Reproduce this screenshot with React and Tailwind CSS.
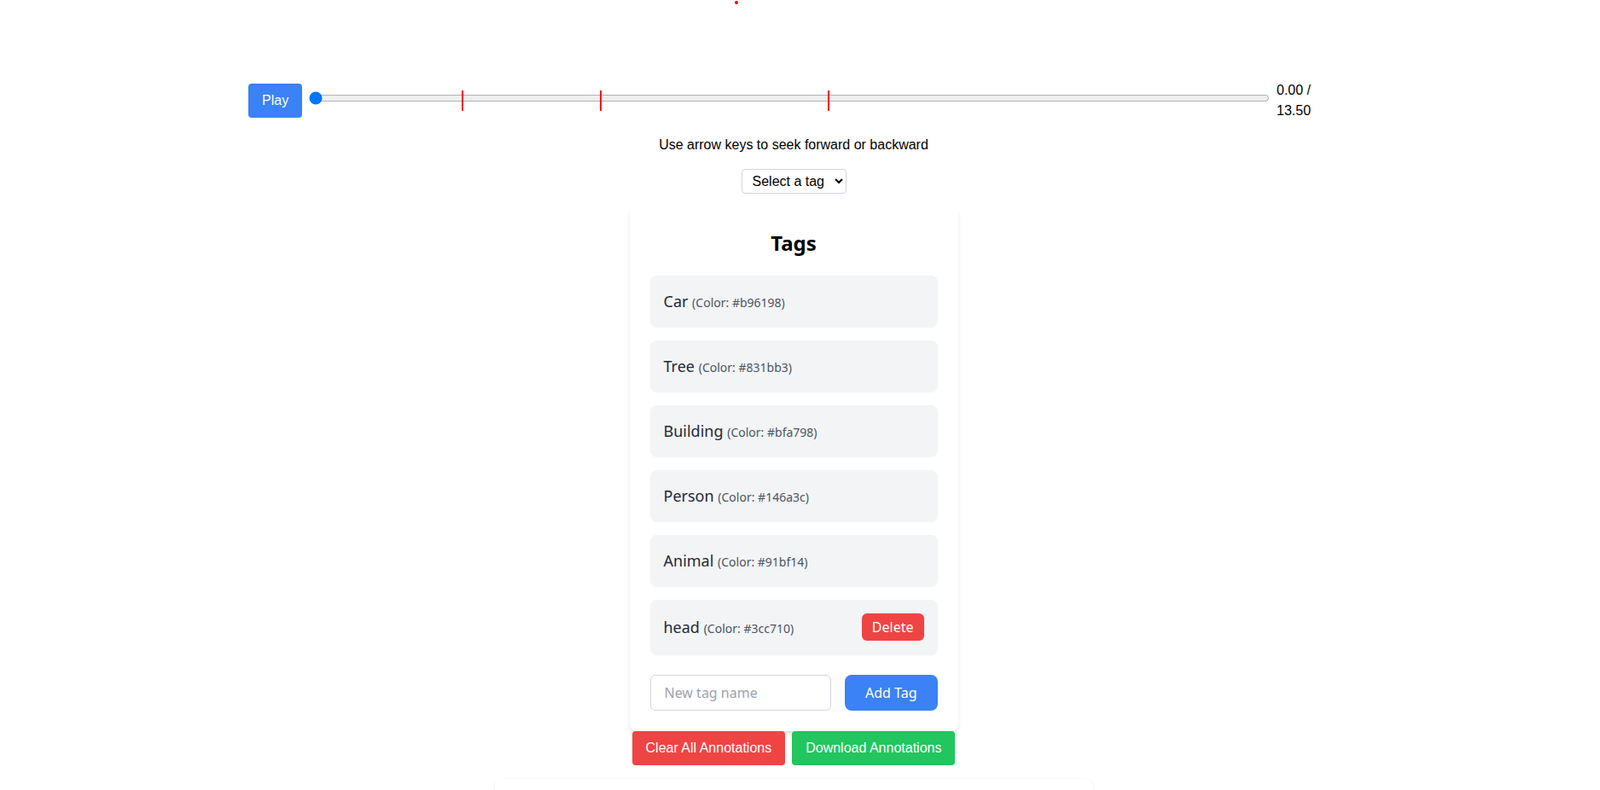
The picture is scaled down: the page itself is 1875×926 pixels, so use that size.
import { useState } from 'react';

const tags = [
  { name: 'Car', color: '#b96198' },
  { name: 'Tree', color: '#831bb3' },
  { name: 'Building', color: '#bfa798' },
  { name: 'Person', color: '#146a3c' },
  { name: 'Animal', color: '#91bf14' },
  { name: 'head', color: '#3cc710', custom: true },
];

// annotation markers on the timeline, as % of slider width
const markers = ['left-[15.9%]', 'left-[30.3%]', 'left-[54%]'];

export default function App() {
  const [time, setTime] = useState(0);
  const [newTag, setNewTag] = useState('');

  return (
    <div className="h-[926px] overflow-hidden bg-white pr-[15px] text-black font-['Liberation_Sans',Arial,sans-serif]">
      <div className="relative h-[94px]">
        <span className="absolute left-[861px] top-[1px] w-1 h-1 rounded-full bg-[red]" />
      </div>

      <div className="mx-auto flex w-[1278px] items-center gap-2 pr-8">
        <button className="rounded bg-[#3b82f6] px-4 py-2 text-white">Play</button>
        <div className="relative flex h-6 flex-1 items-center">
          <input
            type="range"
            min={0}
            max={13.5}
            step={0.01}
            value={time}
            onChange={(e) => setTime(Number(e.target.value))}
            className="w-full -mt-1.5"
          />
          {markers.map((m) => (
            <span key={m} className={`absolute top-0 h-6 w-0.5 bg-[red] ${m}`} />
          ))}
        </div>
        <span className="w-[41px] shrink-0 leading-6">{time.toFixed(2)} / 13.50</span>
      </div>

      <p className="mt-4 text-center leading-6">Use arrow keys to seek forward or backward</p>

      <div className="mt-4 flex justify-center">
        <select className="h-[29px] rounded border border-gray-300 bg-white px-2">
          <option>Select a tag</option>
          {tags.map((t) => (
            <option key={t.name}>{t.name}</option>
          ))}
        </select>
      </div>

      <div className="mx-auto mt-4 w-[385px] rounded-lg bg-white p-6 shadow-md font-['Noto_Sans','Open_Sans',sans-serif]">
        <h2 className="mb-[22px] pt-[2px] text-center text-2xl font-bold">Tags</h2>
        <div className="space-y-4">
          {tags.map((t) => (
            <div key={t.name} className="flex items-center justify-between rounded-lg bg-[#f3f4f6] p-4 shadow-xs">
              <span className="text-lg text-[#1f2937]">
                {t.name} <span className="text-sm text-[#4b5563]">(Color: {t.color})</span>
              </span>
              {t.custom && (
                <button className="rounded-md bg-[#ef4444] px-3 py-1 text-white">Delete</button>
              )}
            </div>
          ))}
        </div>
        <div className="mt-6 flex gap-4">
          <input
            value={newTag}
            onChange={(e) => setNewTag(e.target.value)}
            placeholder="New tag name"
            className="min-w-0 flex-1 rounded-md border border-[#d1d5db] px-4 py-2 placeholder-[#9ca3af]"
          />
          <button className="rounded-lg bg-[#3b82f6] px-6 py-2 text-white">Add Tag</button>
        </div>
      </div>

      <div className="flex justify-center gap-2">
        <button className="rounded bg-[#ef4444] px-4 py-2 text-white">Clear All Annotations</button>
        <button className="rounded bg-[#22c55e] px-4 py-2 text-white">Download Annotations</button>
      </div>

      <div className="mx-auto mt-4 h-[200px] w-[701px] rounded-lg bg-white shadow-sm" />
    </div>
  );
}
